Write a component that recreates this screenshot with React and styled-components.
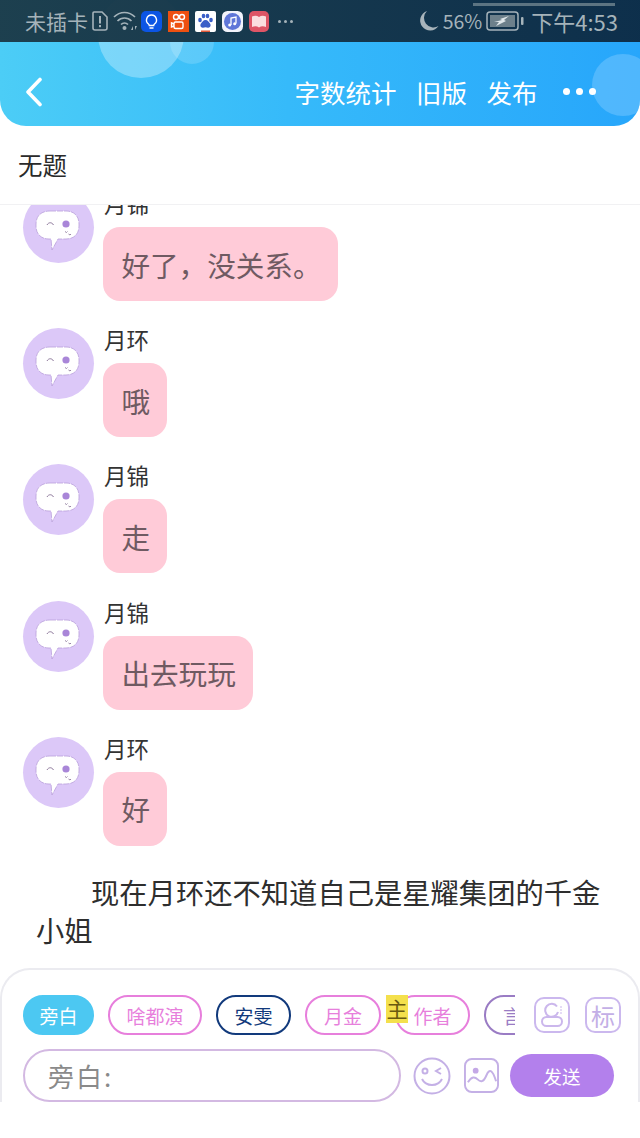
import React from 'react';
import styled, { createGlobalStyle } from 'styled-components';

const Global = createGlobalStyle`
  html, body { margin: 0; padding: 0; background: #fff; }
  body { font-family: "Noto Sans CJK SC", "Noto Sans", sans-serif; }
`;

const Page = styled.div`
  width: 640px;
  height: 1138px;
  display: flex;
  flex-direction: column;
  overflow: hidden;
  background: #fff;
`;

const Top = styled.div`
  position: relative;
  flex: none;
  height: 126px;
  overflow: hidden;
  border-radius: 0 0 26px 26px;
  background: linear-gradient(90deg, #4ccdf6 0%, #36bafa 45%, #27a6fb 100%);
`;

const Blob = styled.div`
  position: absolute;
  left: ${(p) => p.$x}px;
  top: ${(p) => p.$y}px;
  width: ${(p) => p.$size}px;
  height: ${(p) => p.$size}px;
  border-radius: 50%;
  background: ${(p) => p.$bg};
`;

const StatusBar = styled.div`
  position: relative;
  height: 42px;
  display: flex;
  align-items: center;
  padding: 0 22px 0 25px;
  box-sizing: border-box;
  color: #a5b3ba;
  background: linear-gradient(90deg, rgba(27, 58, 72, 0.96), rgba(13, 45, 72, 0.98));
`;

const StatusText = styled.span`
  font-size: ${(p) => p.$size || 21}px;
  margin-left: ${(p) => p.$ml || 0}px;
  line-height: 26px;
  white-space: nowrap;
`;

const StatusGroup = styled.div`
  display: flex;
  align-items: center;
  gap: ${(p) => p.$gap || 0}px;
  margin-left: ${(p) => p.$ml || 0}px;
`;

const StatusRight = styled(StatusGroup)`
  margin-left: auto;
`;

const Handle = styled.div`
  position: absolute;
  right: 25px;
  top: 3px;
  width: 142px;
  height: 3px;
  background: #5c7482;
`;

const HeaderBar = styled.div`
  position: relative;
  height: 84px;
  display: flex;
  align-items: center;
  padding: 15px 44px 0 24px;
  box-sizing: border-box;
  color: #fff;
`;

const HeaderLinks = styled.div`
  margin-left: auto;
  display: flex;
  align-items: center;
  gap: 19.5px;
  font-size: 25.5px;
  line-height: 34px;
`;

const Dots = styled.div`
  display: flex;
  gap: 6px;
  margin-left: 6px;

  i {
    width: 7px;
    height: 7px;
    border-radius: 50%;
    background: #fff;
  }
`;

const TinyDots = styled.div`
  display: flex;
  gap: 3px;
  margin-left: 9px;

  i {
    width: 3px;
    height: 3px;
    border-radius: 50%;
    background: #a5b3ba;
  }
`;

const Title = styled.div`
  flex: none;
  height: 79px;
  padding: 0 0 2px 18px;
  box-sizing: border-box;
  display: flex;
  align-items: center;
  font-size: 24.5px;
  color: #2a2a2a;
  border-bottom: 1px solid #f1f1f3;
`;

const Feed = styled.div`
  flex: 1;
  min-height: 0;
  overflow: hidden;
`;

const FeedInner = styled.div`
  margin-top: -13px;
  display: flex;
  flex-direction: column;
  gap: 27.2px;
`;

const Row = styled.div`
  display: flex;
  gap: 9px;
  padding-left: 23px;
`;

const Avatar = styled.div`
  flex: none;
  width: 71px;
  height: 71px;
  border-radius: 50%;
  background: #dcc8f8;
`;

const Body = styled.div`
  display: flex;
  flex-direction: column;
  align-items: flex-start;
`;

const Name = styled.div`
  height: 26px;
  margin: -2px 0 11px 1px;
  font-size: 22.5px;
  line-height: 26px;
  color: #333;
`;

const Bubble = styled.div`
  height: 74px;
  padding: 0 16.800px 0 18.400px;
  display: flex;
  align-items: center;
  border-radius: 17px;
  background: #ffcbd8;
  color: #6f5a62;
  font-size: 28.6px;
  white-space: nowrap;
`;

const Narration = styled.p`
  margin: 0 30px 0 36px;
  font-size: 28.3px;
  line-height: 38px;
  text-indent: 55px;
  color: #2e2e2e;
`;

const Composer = styled.div`
  flex: none;
  height: 134px;
  margin-bottom: 36px;
  box-sizing: border-box;
  padding: 25px 18px 0 21px;
  border: 2px solid #ebebf0;
  border-bottom: none;
  border-radius: 30px 30px 0 0;
  display: flex;
  flex-direction: column;
  gap: 14px;
  overflow: hidden;
`;

const ToolRow = styled.div`
  display: flex;
  align-items: center;
  height: 40px;
`;

const Chips = styled.div`
  width: 492px;
  height: 40px;
  display: flex;
  gap: 14px;
  overflow: hidden;
  flex: none;
`;

const Chip = styled.div`
  position: relative;
  flex: none;
  width: ${(p) => p.$w}px;
  height: 40px;
  box-sizing: border-box;
  display: flex;
  align-items: center;
  justify-content: center;
  border-radius: 20px;
  border: 2px solid ${(p) => p.$color};
  background: ${(p) => (p.$filled ? p.$color : 'transparent')};
  color: ${(p) => (p.$filled ? '#fff' : p.$color)};
  font-size: 19px;
  white-space: nowrap;
`;

const Badge = styled.span`
  position: absolute;
  left: -11px;
  top: -2px;
  width: 22px;
  height: 28px;
  background: #f4e04d;
  color: #6a5a10;
  font-size: 21px;
  line-height: 26px;
  text-align: center;
`;

const SquareIcon = styled.div`
  flex: none;
  width: 36px;
  height: 36px;
  margin-left: ${(p) => p.$ml}px;
  box-sizing: border-box;
  border: 2px solid #cbb8ee;
  border-radius: 10px;
  display: flex;
  align-items: center;
  justify-content: center;
  color: #c3afe6;
  font-size: 24px;
`;

const InputRow = styled.div`
  display: flex;
  align-items: center;
  height: 53px;
`;

const Input = styled.div`
  flex: none;
  width: 378px;
  height: 53px;
  box-sizing: border-box;
  border: 2px solid #d3b9e2;
  border-radius: 27px;
  padding-left: 23px;
  display: flex;
  align-items: center;
  color: #8a8a8a;
  font-size: 26px;
  letter-spacing: 2px;
`;

const ActionIcon = styled.svg`
  flex: none;
  margin-left: ${(p) => p.$ml}px;
`;

const Send = styled.div`
  flex: none;
  width: 104px;
  height: 43px;
  margin-left: 11px;
  border-radius: 22px;
  background: #b380ec;
  color: #fff;
  font-size: 18.500px;
  display: flex;
  align-items: center;
  justify-content: center;
`;

const AvatarFace = () => (
  <svg width="71" height="71" viewBox="0 0 71 71">
    <path
      d="M27 19h16c8 0 13 5 13 13v2c0 8-5 13-13 13h-8l-6 11-1-11h-2c-8 0-13-5-13-13v-2c0-8 5-13 14-13z"
      fill="#fff"
      stroke="#b9a0da"
      strokeWidth="0.8"
      strokeDasharray="6 1"
    />
    <path d="M24 33c1.500-3 5-3 6.500 0" fill="none" stroke="#8f7a9c" strokeWidth="1" />
    <circle cx="43" cy="32" r="3.600" fill="#a986d8" />
    <path d="M42 39.500l1.500 1 1-1M45.500 42l1.500 1 1-1" fill="none" stroke="#8f7a9c" strokeWidth="0.9" />
  </svg>
);

const SimIcon = () => (
  <svg width="16" height="20" viewBox="0 0 16 20">
    <path d="M2 1h8l5 5v11c0 1-1 2-2 2H3c-1 0-2-1-2-2V2c0-.6.4-1 1-1z" fill="none" stroke="#a5b3ba" strokeWidth="1.6" />
    <rect x="7" y="5" width="2" height="7.5" fill="#a5b3ba" />
    <rect x="7" y="14" width="2" height="2.2" fill="#a5b3ba" />
  </svg>
);

const WifiIcon = () => (
  <svg width="25" height="22" viewBox="0 0 25 22">
    <g fill="none" stroke="#a5b3ba" strokeWidth="1.7">
      <path d="M1 7c6-6 15-6 21 0" />
      <path d="M4.500 11c4-4 10-4 14 0" />
      <path d="M8 14.500c2-2 5-2 7 0" />
    </g>
    <circle cx="11.500" cy="18" r="2" fill="#a5b3ba" />
    <path d="M18 20l2-4v4zM22 16l2 0-2 4z" fill="#a5b3ba" />
  </svg>
);

const AppTile = styled.svg`
  flex: none;
  display: block;
`;

const BulbApp = () => (
  <AppTile width="21" height="21" viewBox="0 0 21 21">
    <rect width="21" height="21" rx="5" fill="#0c55e4" />
    <path d="M10.500 4a5 5 0 0 0-3 9c.6.500.8 1 .8 1.500h4.400c0-.5.2-1 .8-1.500a5 5 0 0 0-3-9z" fill="none" stroke="#fff" strokeWidth="1.4" />
    <path d="M8.500 17h4" stroke="#fff" strokeWidth="1.4" />
  </AppTile>
);

const CameraApp = () => (
  <AppTile width="21" height="21" viewBox="0 0 21 21">
    <rect width="21" height="21" fill="#ee5010" />
    <g fill="none" stroke="#fff" strokeWidth="1.4">
      <circle cx="8" cy="6" r="2.500" />
      <circle cx="14" cy="6" r="2.500" />
      <rect x="6" y="11" width="9" height="6.500" rx="1.500" />
      <path d="M6 13l-2.500-1.200v4.200L6 15" />
    </g>
  </AppTile>
);

const BaiduApp = () => (
  <AppTile width="21" height="21" viewBox="0 0 21 21">
    <rect width="21" height="21" rx="2" fill="#fff" />
    <g fill="#3a5fc8">
      <ellipse cx="5" cy="9" rx="1.800" ry="2.200" />
      <ellipse cx="8.500" cy="5" rx="1.800" ry="2.300" />
      <ellipse cx="12.500" cy="5" rx="1.800" ry="2.300" />
      <ellipse cx="16" cy="9" rx="1.800" ry="2.200" />
      <path d="M10.500 9c-2.500 0-3 2-4.500 3.500-1.500 2 0 4.500 2 4.200 1-.1 1.500-.4 2.500-.4s1.500.3 2.500.4c2 .3 3.500-2.200 2-4.200C13.500 11 13 9 10.500 9z" />
    </g>
    <rect x="6" y="19.500" width="9" height="1.500" fill="#e25a3a" />
  </AppTile>
);

const MusicApp = () => (
  <AppTile width="21" height="21" viewBox="0 0 21 21">
    <rect width="21" height="21" rx="5.500" fill="#f2f3fb" />
    <circle cx="10.500" cy="10.500" r="8.500" fill="#5f76d8" />
    <path d="M9 14V7l5-1v6.500" fill="none" stroke="#fff" strokeWidth="1.300" />
    <circle cx="7.700" cy="14" r="1.500" fill="#fff" />
    <circle cx="12.700" cy="12.700" r="1.500" fill="#fff" />
  </AppTile>
);

const BookApp = () => (
  <AppTile width="20" height="21" viewBox="0 0 20 21">
    <rect width="20" height="21" rx="5" fill="#de5566" />
    <path d="M3 5.500c2.500-1 5-1 7 .5 2-1.500 4.500-1.500 7-.5V16c-2.500-1-5-1-7 .5-2-1.500-4.500-1.500-7-.5z" fill="#fbdfe0" />
  </AppTile>
);

const MoonIcon = () => (
  <svg width="20" height="22" viewBox="0 0 20 22">
    <path d="M8 1a10 10 0 1 0 11.500 15A9.500 9.500 0 0 1 8 1z" fill="#a8b4bb" />
  </svg>
);

const BatteryIcon = () => (
  <svg width="38" height="20" viewBox="0 0 38 20">
    <rect x="1" y="1" width="31" height="18" rx="3" fill="none" stroke="#a5b3ba" strokeWidth="1.500" />
    <rect x="4" y="4" width="25" height="12" fill="#6d808b" />
    <path d="M8 11l8-2-2-1 9-3-5 4 2 1-10 5 3-4z" fill="#dfe6ea" />
    <rect x="35" y="6" width="2.500" height="8" rx="1" fill="#a5b3ba" />
  </svg>
);

const BackIcon = () => (
  <svg width="20" height="30" viewBox="0 0 20 30">
    <path d="M16 2.500L4 15l12 12.500" fill="none" stroke="#fff" strokeWidth="3.600" strokeLinecap="round" strokeLinejoin="round" />
  </svg>
);

const PersonGlyph = () => (
  <svg width="28" height="28" viewBox="0 0 28 28">
    <g fill="none" stroke="#cbb7ec" strokeWidth="2">
      <path d="M19 5.500A6.500 6.500 0 1 0 20 11" />
      <rect x="4" y="16" width="20" height="9" rx="4.500" />
    </g>
    <path d="M22 6h2M22 9h2M22 12h2" stroke="#cbb7ec" strokeWidth="1" />
  </svg>
);

const chips = [
  { label: '旁白', w: 71, color: '#4cc8f2', filled: true },
  { label: '啥都演', w: 94, color: '#e77fdc' },
  { label: '安雯', w: 75, color: '#123a7c' },
  { label: '月金', w: 76, color: '#e77fdc' },
  { label: '作者', w: 75, color: '#e77fdc', badge: '主' },
  { label: '言情', w: 76, color: '#9a7cc4' },
];

const messages = [
  { name: '月锦', text: '好了，没关系。' },
  { name: '月环', text: '哦' },
  { name: '月锦', text: '走' },
  { name: '月锦', text: '出去玩玩' },
  { name: '月环', text: '好' },
];

export default function App() {
  return (
    <Page>
      <Global />
      <Top>
        <Blob $x={98} $y={-8} $size={86} $bg="rgba(255,255,255,0.3)" />
        <Blob $x={170} $y={20} $size={44} $bg="rgba(255,255,255,0.16)" />
        <Blob $x={592} $y={54} $size={62} $bg="rgba(120,200,255,0.5)" />
        <StatusBar>
          <Handle />
          <StatusGroup>
            <StatusText>未插卡</StatusText>
            <StatusGroup $gap={5} $ml={4}>
              <SimIcon />
              <WifiIcon />
            </StatusGroup>
            <StatusGroup $gap={6} $ml={3}>
              <BulbApp />
              <CameraApp />
              <BaiduApp />
              <MusicApp />
              <BookApp />
            </StatusGroup>
            <TinyDots>
              <i />
              <i />
              <i />
            </TinyDots>
          </StatusGroup>
          <StatusRight $gap={4}>
            <MoonIcon />
            <StatusText $size={19.5}>56%</StatusText>
            <BatteryIcon />
            <StatusText $size={22} $ml={3}>下午4:53</StatusText>
          </StatusRight>
        </StatusBar>
        <HeaderBar>
          <BackIcon />
          <HeaderLinks>
            <span>字数统计</span>
            <span>旧版</span>
            <span>发布</span>
            <Dots>
              <i />
              <i />
              <i />
            </Dots>
          </HeaderLinks>
        </HeaderBar>
      </Top>
      <Title>无题</Title>
      <Feed>
        <FeedInner>
          {messages.map((m, i) => (
            <Row key={i}>
              <Avatar>
                <AvatarFace />
              </Avatar>
              <Body>
                <Name>{m.name}</Name>
                <Bubble>{m.text}</Bubble>
              </Body>
            </Row>
          ))}
          <Narration>现在月环还不知道自己是星耀集团的千金小姐</Narration>
        </FeedInner>
      </Feed>
      <Composer>
        <ToolRow>
          <Chips>
            {chips.map((c) => (
              <Chip key={c.label} $w={c.w} $color={c.color} $filled={c.filled}>
                {c.badge && <Badge>{c.badge}</Badge>}
                {c.label}
              </Chip>
            ))}
          </Chips>
          <SquareIcon $ml={19}>
            <PersonGlyph />
          </SquareIcon>
          <SquareIcon $ml={15}>标</SquareIcon>
        </ToolRow>
        <InputRow>
          <Input>旁白:</Input>
          <ActionIcon $ml={12} width="38" height="38" viewBox="0 0 38 38">
            <g fill="none" stroke="#c4b0e6" strokeWidth="2">
              <circle cx="19" cy="19" r="17.500" />
              <circle cx="12" cy="14" r="2.500" />
              <path d="M28 11l-5 3 5 3" />
              <path d="M9 22c4 8 16 8 20 0" />
            </g>
          </ActionIcon>
          <ActionIcon $ml={13} width="35" height="35" viewBox="0 0 36 36">
            <g fill="none" stroke="#c4b0e6" strokeWidth="2">
              <rect x="1" y="1" width="34" height="34" rx="7" />
              <path d="M4 25c4-6 7-6 10-3s6 3 9-4 6-7 10 6" />
            </g>
            <circle cx="12" cy="13" r="3" fill="#c4a8e6" />
          </ActionIcon>
          <Send>发送</Send>
        </InputRow>
      </Composer>
    </Page>
  );
}
